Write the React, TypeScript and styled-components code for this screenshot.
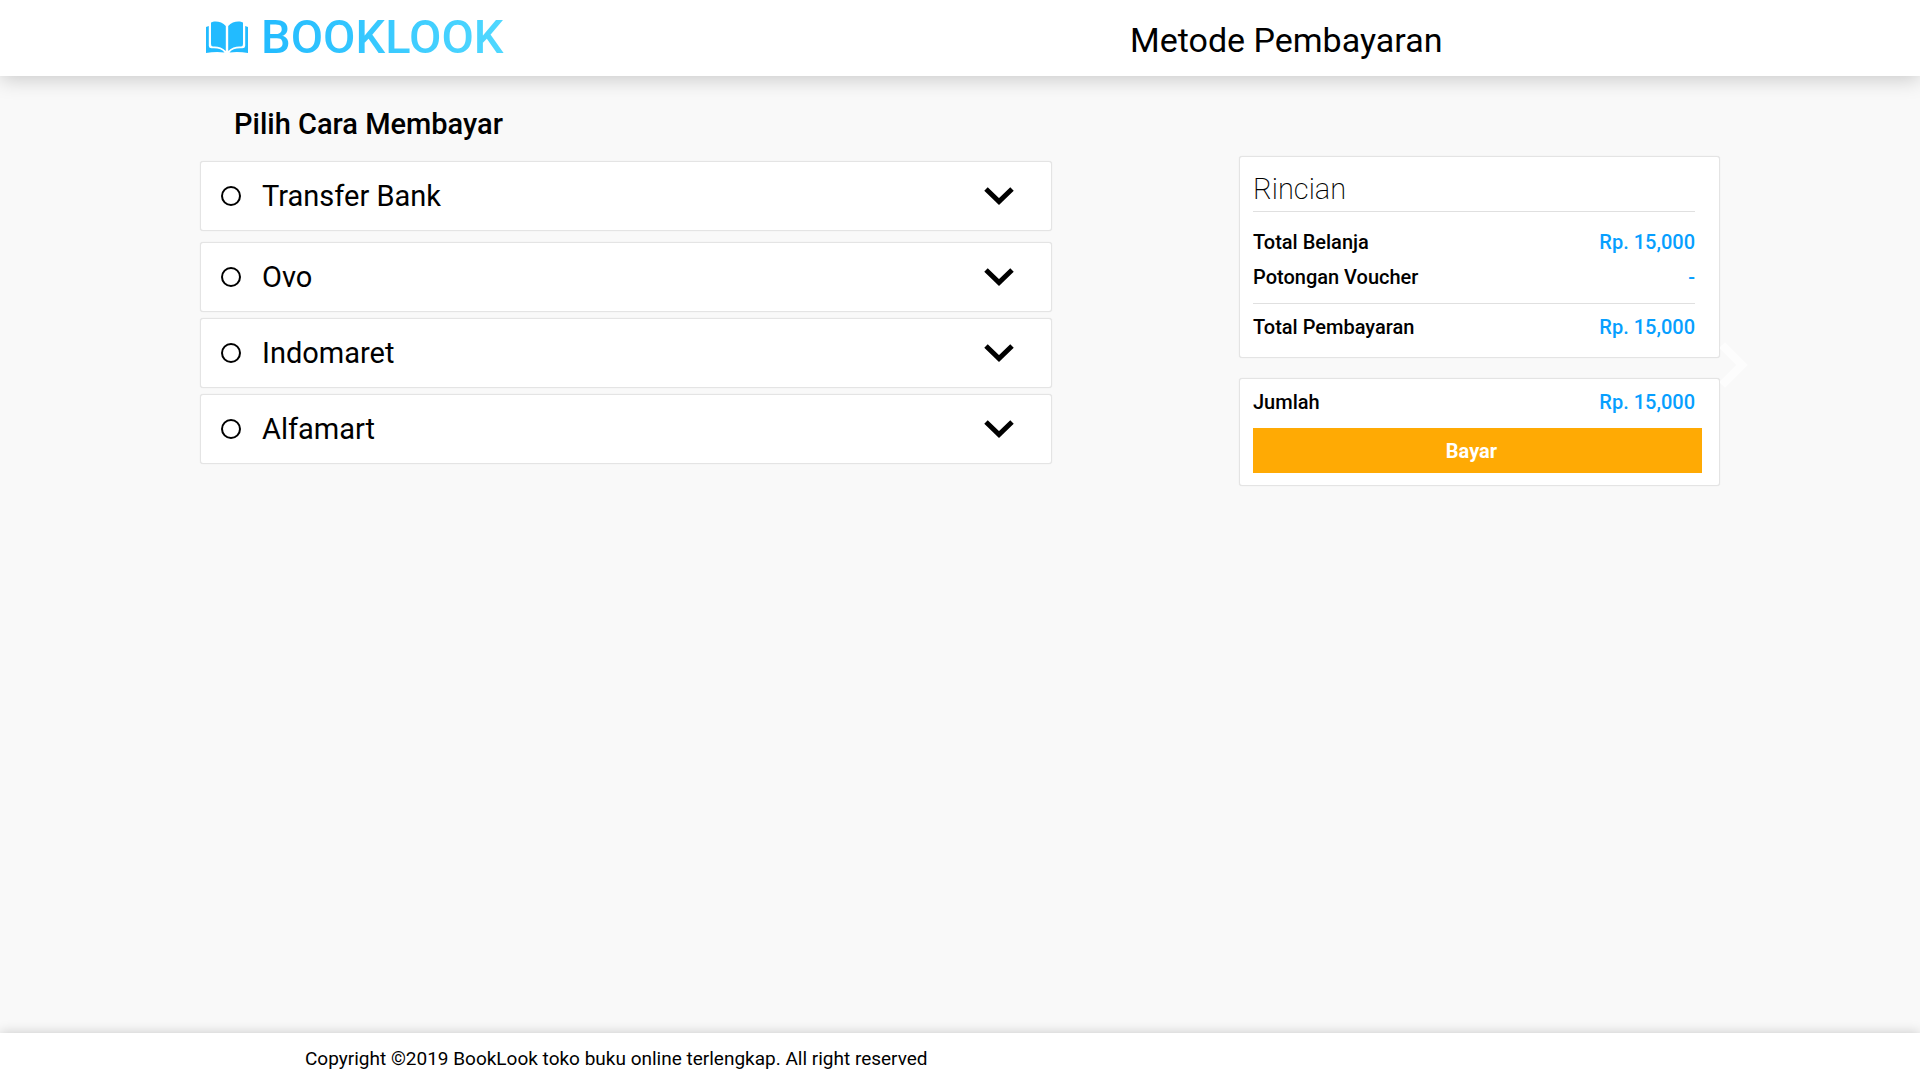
import React from 'react';
import styled, { createGlobalStyle } from 'styled-components';

const GlobalStyle = createGlobalStyle`
  * { box-sizing: border-box; }
  body {
    margin: 0;
    background: #f9f9f9;
    color: #000;
    font-family: Roboto, "Liberation Sans", sans-serif;
  }
`;

const Page = styled.div`
  min-height: 100vh;
  display: flex;
  flex-direction: column;
`;

const Header = styled.header`
  height: 76px;
  padding: 0 200px;
  display: grid;
  grid-template-columns: 925px 1fr;
  align-items: center;
  background: #fff;
  box-shadow: 0 3px 20px rgba(0, 0, 0, 0.2);
`;

const Brand = styled.a`
  display: flex;
  align-items: center;
  gap: 13px;
  padding: 0 0 2px 6px;
  text-decoration: none;
`;

const BrandIcon = styled.svg`
  width: 42px;
  height: 32px;
  flex: none;
`;

const BrandName = styled.span`
  font-size: 47px;
  line-height: 54px;
  font-weight: 500;
  color: transparent;
  background: linear-gradient(90deg, #22bbff, #50d8ff);
  background-clip: text;
`;

const PageTitle = styled.h1`
  margin: 0;
  padding: 4px 0 0 5px;
  font-size: 34px;
  line-height: 40px;
  font-weight: 400;
`;

const Main = styled.main`
  flex: 1;
  padding: 30px 200px;
  display: grid;
  grid-template-columns: minmax(0, 1fr) 481px;
  column-gap: 187px;
  align-items: start;
`;

const Methods = styled.form`
  display: flex;
  flex-direction: column;
  gap: 6px;
`;

const SectionTitle = styled.h2`
  margin: 0 0 13px 34px;
  font-size: 29px;
  line-height: 36px;
  font-weight: 500;
`;

const Card = styled.div`
  background: #fff;
  border: 1px solid #e4e4e4;
  border-radius: 3px;
  box-shadow: 0 0 1px rgba(0, 0, 0, 0.12);
`;

const Method = styled(Card).attrs({ as: 'label' })<{ $spaced?: boolean }>`
  height: 70px;
  margin-bottom: ${(p) => (p.$spaced ? 5 : 0)}px;
  padding: 0 37px 0 20px;
  display: flex;
  align-items: center;
  gap: 21px;
  cursor: pointer;
`;

const Radio = styled.input`
  appearance: none;
  width: 20px;
  height: 20px;
  margin: 0;
  border: 2px solid #000;
  border-radius: 50%;
  &:checked {
    background: radial-gradient(#000 45%, transparent 50%);
  }
`;

const MethodName = styled.span`
  flex: 1;
  font-size: 29px;
  line-height: 36px;
`;

const Chevron = styled.svg`
  width: 30px;
  height: 18px;
`;

const Summary = styled.aside`
  position: relative;
  padding-top: 50px;
  display: flex;
  flex-direction: column;
  gap: 20px;
`;

const SummaryCard = styled(Card)`
  padding: 11px 24px 18px 13px;
`;

const PayCard = styled(Card)`
  padding: 11px 17px 12px 13px;
`;

const SummaryTitle = styled.h2`
  margin: 0 0 18px;
  padding: 3px 0 4px;
  border-bottom: 1px solid #e0e0e0;
  font-size: 29px;
  line-height: 36px;
  font-weight: 200;
`;

const Lines = styled.dl`
  margin: 0;
`;

const Line = styled.div<{ $total?: boolean; $inset?: boolean }>`
  display: flex;
  justify-content: space-between;
  font-size: 20px;
  line-height: 24px;
  font-weight: 500;
  padding: ${(p) => (p.$total ? '11px 0 0' : p.$inset ? '0 7px 14px 0' : '0 0 11px')};
  margin-top: ${(p) => (p.$total ? 3 : 0)}px;
  border-top: ${(p) => (p.$total ? '1px solid #e0e0e0' : '0')};
`;

const Term = styled.dt``;

const Amount = styled.dd`
  margin: 0;
  color: #079fff;
`;

const PayButton = styled.button`
  display: block;
  width: 100%;
  height: 45px;
  padding: 0 12px 0 0;
  border: 0;
  background: #ffaa04;
  color: #fff;
  font: 700 20px/24px Roboto, "Liberation Sans", sans-serif;
  cursor: pointer;
`;

const NextArrow = styled.svg`
  position: absolute;
  left: 100%;
  top: 236px;
  width: 28px;
  height: 46px;
`;

const Footer = styled.footer`
  height: 51px;
  padding: 1px 305px 0;
  display: flex;
  align-items: center;
  background: #fff;
  box-shadow: 0 0 12px rgba(0, 0, 0, 0.2);
  font-size: 19px;
  line-height: 22px;
`;

const methods = ['Transfer Bank', 'Ovo', 'Indomaret', 'Alfamart'];

export default function App() {
  return (
    <Page>
      <GlobalStyle />
      <Header>
        <Brand href="#">
          <BrandIcon viewBox="0 0 42 32" fill="#22bbff" aria-hidden="true">
            <path d="M5 1.500C8 -0.500 16 0 19.800 5V30C16 26 11 25 7 25.500Q5 25.500 5 23Z" />
            <path d="M37 1.500C34 -0.500 26 0 22.200 5V30C26 26 31 25 35 25.500Q37 25.500 37 23Z" />
            <path d="M0 6L2.800 5V25Q3 27.500 6 27.300C12 27 16 28 18.500 31.500C12 30.500 6 31 0 32Z" />
            <path d="M42 6L39.200 5V25Q39 27.500 36 27.300C30 27 26 28 23.500 31.500C30 30.500 36 31 42 32Z" />
          </BrandIcon>
          <BrandName>BOOKLOOK</BrandName>
        </Brand>
        <PageTitle>Metode Pembayaran</PageTitle>
      </Header>
      <Main>
        <Methods>
          <SectionTitle>Pilih Cara Membayar</SectionTitle>
          {methods.map((name, i) => (
            <Method key={name} $spaced={i === 0}>
              <Radio type="radio" name="method" value={name} />
              <MethodName>{name}</MethodName>
              <Chevron viewBox="0 0 30 18" aria-hidden="true">
                <path d="M2 2L15 14.500L28 2" fill="none" stroke="#000" strokeWidth="5" />
              </Chevron>
            </Method>
          ))}
        </Methods>
        <Summary>
          <SummaryCard>
            <SummaryTitle>Rincian</SummaryTitle>
            <Lines>
              <Line>
                <Term>Total Belanja</Term>
                <Amount>Rp. 15,000</Amount>
              </Line>
              <Line>
                <Term>Potongan Voucher</Term>
                <Amount>-</Amount>
              </Line>
              <Line $total>
                <Term>Total Pembayaran</Term>
                <Amount>Rp. 15,000</Amount>
              </Line>
            </Lines>
          </SummaryCard>
          <PayCard>
            <Lines>
              <Line $inset>
                <Term>Jumlah</Term>
                <Amount>Rp. 15,000</Amount>
              </Line>
            </Lines>
            <PayButton type="button">Bayar</PayButton>
          </PayCard>
          <NextArrow viewBox="0 0 28 46" aria-hidden="true">
            <path d="M2 3L22 23L2 43" fill="none" stroke="#fdfdfd" strokeWidth="8" />
          </NextArrow>
        </Summary>
      </Main>
      <Footer>Copyright ©2019 BookLook toko buku online terlengkap. All right reserved</Footer>
    </Page>
  );
}
